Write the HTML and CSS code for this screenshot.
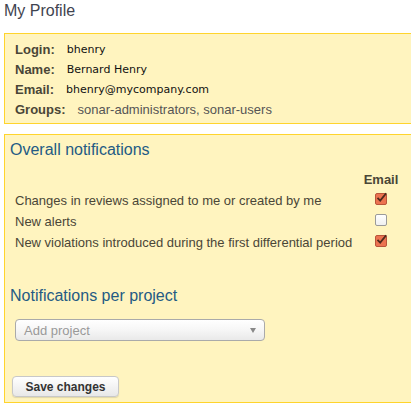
FILE: index.html
```html
<!DOCTYPE html>
<html>
<head>
<meta charset="utf-8">
<link rel="stylesheet" href="styles.css">
</head>
<body>
<h1 class="page-title">My Profile</h1>

<div class="box profile">
  <div class="row"><span class="lbl">Login:</span><span class="val mono">bhenry</span></div>
  <div class="row"><span class="lbl">Name:</span><span class="val mono">Bernard Henry</span></div>
  <div class="row"><span class="lbl">Email:</span><span class="val mono">bhenry@mycompany.com</span></div>
  <div class="row"><span class="lbl">Groups:</span><span class="val">sonar-administrators, sonar-users</span></div>
</div>

<div class="box notif">
  <h2 class="section-title">Overall notifications</h2>
  <div class="ntable">
    <div class="nhead-spacer"></div>
    <div class="nhead">Email</div>

    <div class="ncell">Changes in reviews assigned to me or created by me</div>
    <div class="ncheck"><span class="cb checked"><svg viewBox="0 0 12 12" width="12" height="12"><path d="M2.5 5.8 L5.2 8.6 L11.2 1.2" fill="none" stroke="#4e2a1c" stroke-width="1.8"/></svg></span></div>

    <div class="ncell">New alerts</div>
    <div class="ncheck"><span class="cb"></span></div>

    <div class="ncell">New violations introduced during the first differential period</div>
    <div class="ncheck"><span class="cb checked"><svg viewBox="0 0 12 12" width="12" height="12"><path d="M2.5 5.8 L5.2 8.6 L11.2 1.2" fill="none" stroke="#4e2a1c" stroke-width="1.8"/></svg></span></div>
  </div>

  <h2 class="section-title per-project">Notifications per project</h2>
  <div class="select">
    <span class="placeholder">Add project</span>
    <span class="arrow"></span>
  </div>

  <button class="btn" type="button">Save changes</button>
</div>
</body>
</html>
```

FILE: styles.css
```css
body {
  margin: 0;
  padding: 0 0 0 4px;
  font-family: "Liberation Sans", Arial, sans-serif;
  font-size: 13px;
  color: #444;
  background: #fff;
}
.page-title {
  margin: 0 0 12px 0;
  padding-top: 1px;
  font-size: 16px;
  line-height: 20px;
  font-weight: normal;
  color: #3f4450;
}
.box {
  background: #fff4bf;
  border: 1px solid #ffd42c;
  border-right: 0;
}
.profile {
  padding: 5px 10px 4px 10px;
}
.row {
  display: flex;
  align-items: center;
  gap: 12px;
  height: 20px;
}
.lbl {
  font-weight: bold;
  color: #4a4637;
}
.val {
  color: #555;
}
.val.mono {
  font-family: "DejaVu Sans", Verdana, sans-serif;
  font-size: 11px;
  color: #111;
}
.notif {
  margin-top: 10px;
  padding: 5px 5px 5px 5px;
}
.section-title {
  margin: 0;
  font-size: 16px;
  line-height: 20px;
  font-weight: normal;
  color: #245b84;
}
.ntable {
  margin: 10px 0 0 5px;
  display: grid;
  grid-template-columns: 340px 52px;
  grid-auto-rows: 21px;
  grid-template-rows: 20px;
  color: #4a4637;
}
.nhead {
  font-weight: bold;
  text-align: center;
  line-height: 20px;
  color: #4a4637;
}
.ncell {
  line-height: 21px;
  white-space: nowrap;
}
.ncheck {
  display: flex;
  justify-content: center;
  align-items: center;
  padding-bottom: 3px;
  padding-right: 1px;
}
.cb {
  box-sizing: border-box;
  width: 12px;
  height: 12px;
  border: 1px solid #9a9a9a;
  border-radius: 2px;
  background: linear-gradient(#ffffff, #f0f0f0);
  position: relative;
}
.cb.checked {
  background: #ec7350;
  border-color: #b9543a;
}
.cb svg {
  position: absolute;
  left: -1px;
  top: -2px;
  overflow: visible;
}
.per-project {
  margin-top: 33px;
}
.select {
  margin: 13px 0 0 5px;
  box-sizing: border-box;
  width: 250px;
  height: 22px;
  border: 1px solid #aaa;
  border-radius: 4px;
  background: linear-gradient(#ffffff 0%, #f6f6f6 50%, #e9e9e9 100%);
  display: flex;
  align-items: center;
  justify-content: space-between;
  padding: 0 8px 0 8px;
}
.placeholder {
  color: #999;
  font-size: 13px;
}
.arrow {
  width: 0;
  height: 0;
  border-left: 3.5px solid transparent;
  border-right: 3.5px solid transparent;
  border-top: 5px solid #888;
  margin-top: 1px;
}
.btn {
  display: block;
  margin: 35px 0 0 2px;
  box-sizing: border-box;
  width: 107px;
  height: 21px;
  padding: 0;
  border: 1px solid #c8c8c8;
  border-radius: 4px;
  background: linear-gradient(#ffffff, #e8e8e8);
  box-shadow: 0 1px 1px rgba(0,0,0,0.12);
  font-family: "Liberation Sans", Arial, sans-serif;
  font-size: 12px;
  font-weight: bold;
  color: #333;
}
```
